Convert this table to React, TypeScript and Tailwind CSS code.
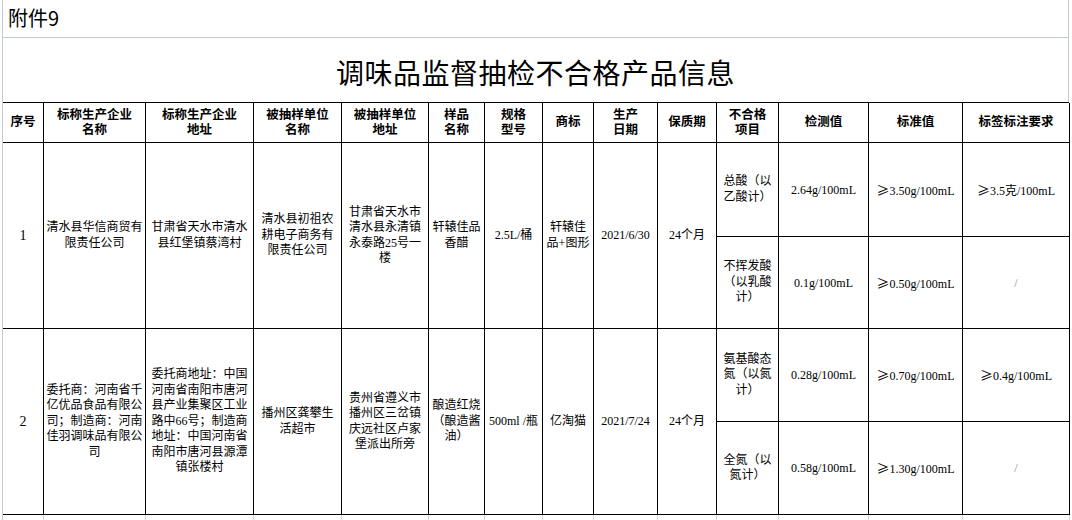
import React from "react";

const CJK = "font-['Noto_Sans_CJK_SC',sans-serif]";
const BODY = "font-['Liberation_Serif','Noto_Sans_CJK_SC',serif]";

const headers = [
  "序号",
  "标称生产企业\n名称",
  "标称生产企业\n地址",
  "被抽样单位\n名称",
  "被抽样单位\n地址",
  "样品\n名称",
  "规格\n型号",
  "商标",
  "生产\n日期",
  "保质期",
  "不合格\n项目",
  "检测值",
  "标准值",
  "标签标注要求",
];

interface Sample {
  no: string;
  fields: string[];
  items: { name: string; measured: string; standard: string; label: string }[];
}

const samples: Sample[] = [
  {
    no: "1",
    fields: [
      "清水县华信商贸有\n限责任公司",
      "甘肃省天水市清水\n县红堡镇蔡湾村",
      "清水县初祖农\n耕电子商务有\n限责任公司",
      "甘肃省天水市\n清水县永清镇\n永泰路25号一\n楼",
      "轩辕佳品\n香醋",
      "2.5L/桶",
      "轩辕佳\n品+图形",
      "2021/6/30",
      "24个月",
    ],
    items: [
      { name: "总酸（以\n乙酸计）", measured: "2.64g/100mL", standard: "≥3.50g/100mL", label: "≥3.5克/100mL" },
      { name: "不挥发酸\n（以乳酸\n计）", measured: "0.1g/100mL", standard: "≥0.50g/100mL", label: "/" },
    ],
  },
  {
    no: "2",
    fields: [
      "委托商：河南省千\n亿优品食品有限公\n司；制造商：河南\n佳羽调味品有限公\n司",
      "委托商地址：中国\n河南省南阳市唐河\n县产业集聚区工业\n路中66号；制造商\n地址：中国河南省\n南阳市唐河县源潭\n镇张楼村",
      "播州区龚攀生\n活超市",
      "贵州省遵义市\n播州区三岔镇\n庆远社区卢家\n堡派出所旁",
      "酿造红烧\n（酿造酱\n油）",
      "500ml /瓶",
      "亿淘猫",
      "2021/7/24",
      "24个月",
    ],
    items: [
      { name: "氨基酸态\n氮（以氮\n计）", measured: "0.28g/100mL", standard: "≥0.70g/100mL", label: "≥0.4g/100mL" },
      { name: "全氮（以\n氮计）", measured: "0.58g/100mL", standard: "≥1.30g/100mL", label: "/" },
    ],
  },
];

function Lines({ text }: { text: string }) {
  return (
    <>
      {text.split("\n").map((line, i) => (
        <span key={i} className="block whitespace-nowrap">
          {line}
        </span>
      ))}
    </>
  );
}

// the sheet shows ≥ in a wide CJK glyph, so give it its own font
function Value({ text }: { text: string }) {
  if (!text.startsWith("≥")) return <>{text}</>;
  return (
    <span className="whitespace-nowrap">
      <span className={`${CJK} text-[13px]`}>≥</span>
      {text.slice(1)}
    </span>
  );
}

function Cell({ children, className = "" }: { children: React.ReactNode; className?: string }) {
  return (
    <div
      className={`flex flex-col items-center justify-center text-center border-r border-b border-black ${className}`}
    >
      {children}
    </div>
  );
}

export default function App() {
  return (
    <div className="w-[1072px] h-[520px] bg-white overflow-hidden pl-[2px] text-black">
      <div className="w-[1067px] h-[520px] border-l border-[#c3c9d6] flex flex-col">
        {/* sheet header */}
        <div className={`h-[38px] border-b border-r border-[#c3c9d6] flex items-center pl-[5px] text-[20px] ${CJK}`}>
          附件9
        </div>
        <div
          className={`h-[65px] border-r border-[#c3c9d6] flex items-center justify-center pt-[4px] text-[28px] tracking-[0.5px] ${CJK}`}
        >
          调味品监督抽检不合格产品信息
        </div>

        {/* table */}
        <div className="grid grid-cols-[41px_102px_108px_88px_87px_56px_58px_51px_64px_59px_62px_90px_94px_107px] grid-rows-[40px_94px_92px_93px_93px_5px] border-t border-black">
          {headers.map((h) => (
            <Cell key={h} className={`text-[12.5px] font-bold leading-[15px] ${BODY}`}>
              <Lines text={h} />
            </Cell>
          ))}

          {samples.map((s) => (
            <React.Fragment key={s.no}>
              <Cell className={`row-span-2 text-[14px] ${BODY}`}>{s.no}</Cell>
              {s.fields.map((f, i) => (
                <Cell key={i} className={`row-span-2 text-[12px] leading-[15.5px] ${BODY}`}>
                  <Lines text={f} />
                </Cell>
              ))}
              {s.items.map((it) => (
                <React.Fragment key={it.name}>
                  <Cell className={`text-[12px] leading-[15.5px] ${BODY}`}>
                    <Lines text={it.name} />
                  </Cell>
                  <Cell className={`text-[12px] ${BODY}`}>{it.measured}</Cell>
                  <Cell className={`text-[12px] ${BODY}`}>
                    <Value text={it.standard} />
                  </Cell>
                  <Cell className={`text-[12px] ${BODY} ${it.label === "/" ? "text-[#8a8a8a]" : ""}`}>
                    <Value text={it.label} />
                  </Cell>
                </React.Fragment>
              ))}
            </React.Fragment>
          ))}

          {headers.map((h) => (
            <div key={"g" + h} className="border-r border-[#d3d8e2]" />
          ))}
        </div>
      </div>
    </div>
  );
}
